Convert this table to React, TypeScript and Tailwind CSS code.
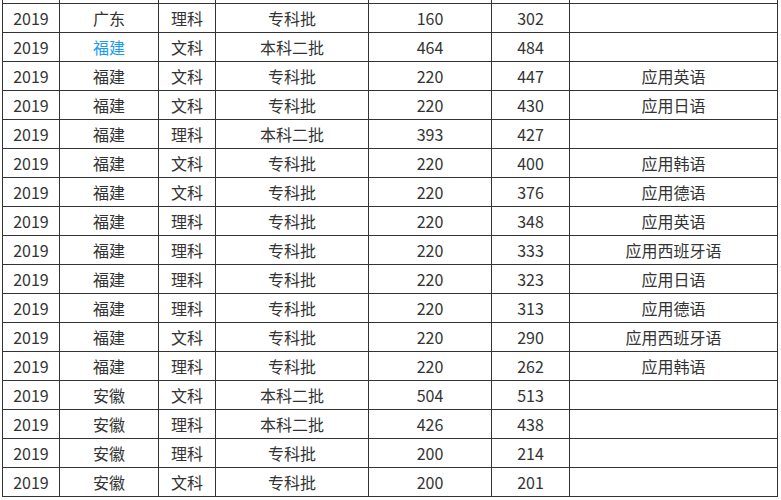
import React from "react";

type Row = [string, string, string, string, string, string, string, boolean?];

const rows: Row[] = [
  ["", "", "", "", "", "", ""],
  ["2019", "广东", "理科", "专科批", "160", "302", ""],
  ["2019", "福建", "文科", "本科二批", "464", "484", "", true],
  ["2019", "福建", "文科", "专科批", "220", "447", "应用英语"],
  ["2019", "福建", "文科", "专科批", "220", "430", "应用日语"],
  ["2019", "福建", "理科", "本科二批", "393", "427", ""],
  ["2019", "福建", "文科", "专科批", "220", "400", "应用韩语"],
  ["2019", "福建", "文科", "专科批", "220", "376", "应用德语"],
  ["2019", "福建", "理科", "专科批", "220", "348", "应用英语"],
  ["2019", "福建", "理科", "专科批", "220", "333", "应用西班牙语"],
  ["2019", "福建", "理科", "专科批", "220", "323", "应用日语"],
  ["2019", "福建", "理科", "专科批", "220", "313", "应用德语"],
  ["2019", "福建", "文科", "专科批", "220", "290", "应用西班牙语"],
  ["2019", "福建", "理科", "专科批", "220", "262", "应用韩语"],
  ["2019", "安徽", "文科", "本科二批", "504", "513", ""],
  ["2019", "安徽", "理科", "本科二批", "426", "438", ""],
  ["2019", "安徽", "理科", "专科批", "200", "214", ""],
  ["2019", "安徽", "文科", "专科批", "200", "201", ""],
];

const widths = ["w-[57px]", "w-[99px]", "w-[57px]", "w-[153px]", "w-[123px]", "w-[78px]", "w-[208px]"];

export default function App() {
  return (
    <div className="w-[781px] h-[500px] overflow-hidden bg-white">
      <table
        className="ml-[2px] mt-[-26px] w-[776px] table-fixed border-collapse text-[16px] leading-[20px] text-[#333]"
        style={{ fontFamily: '"Microsoft YaHei", "Noto Sans CJK SC", "Noto Sans", sans-serif' }}
      >
        <colgroup>
          {widths.map((w, i) => (
            <col key={i} className={w} />
          ))}
        </colgroup>
        <tbody>
          {rows.map((r, i) => (
            <tr key={i} className="h-[29px]">
              {r.slice(0, 7).map((c, j) => (
                <td
                  key={j}
                  className={
                    "border border-[#333] p-0 text-center align-middle " +
                    (j === 1 && r[7] ? "text-[#1b9cf2]" : "")
                  }
                >
                  {c as string}
                </td>
              ))}
            </tr>
          ))}
        </tbody>
      </table>
    </div>
  );
}
